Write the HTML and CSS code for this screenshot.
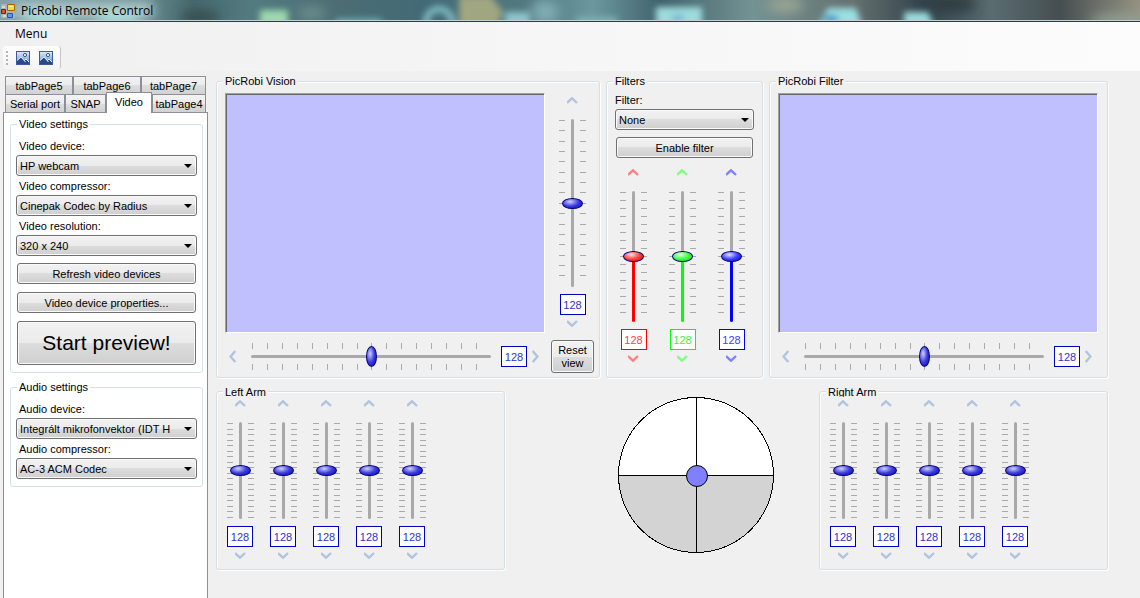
FILE: index.html
```html
<!DOCTYPE html>
<html lang="en">
<head>
<meta charset="utf-8">
<title>PicRobi Remote Control</title>
<link rel="stylesheet" href="styles.css">
</head>
<body>
<svg class="defs" aria-hidden="true">
  <defs>
    <symbol id="up" viewBox="0 0 12 7"><path d="M0 6 5 1.300 10 6" fill="none" stroke="currentColor" stroke-width="2.400"/></symbol>
    <symbol id="down" viewBox="0 0 12 7"><path d="M0 1 5 5.700 10 1" fill="none" stroke="currentColor" stroke-width="2.400"/></symbol>
    <symbol id="left" viewBox="0 0 7 13"><path d="M6.300 1 1.500 6.500 6.300 12" fill="none" stroke="currentColor" stroke-width="2.400"/></symbol>
    <symbol id="right" viewBox="0 0 7 13"><path d="M.7 1 5.500 6.500 .7 12" fill="none" stroke="currentColor" stroke-width="2.400"/></symbol>
    <symbol id="ticks-view" viewBox="0 0 27 168"><path shape-rendering="crispEdges" stroke="#a9a9a9" d="M0 1.500h6m15 0h6M0 11.500h6m15 0h6M0 22.500h6m15 0h6M0 32.500h6m15 0h6M0 42.500h6m15 0h6M0 53.500h6m15 0h6M0 63.500h6m15 0h6M0 73.500h6m15 0h6M0 84.500h6m15 0h6M0 94.500h6m15 0h6M0 105.500h6m15 0h6M0 115.500h6m15 0h6M0 125.500h6m15 0h6M0 136.500h6m15 0h6M0 146.500h6m15 0h6M0 156.500h6m15 0h6"/></symbol>
    <symbol id="ticks-filter" viewBox="0 0 27 131"><path shape-rendering="crispEdges" stroke="#a9a9a9" d="M0 1.500h6m15 0h6M0 9.500h6m15 0h6M0 17.500h6m15 0h6M0 25.500h6m15 0h6M0 33.500h6m15 0h6M0 41.500h6m15 0h6M0 49.500h6m15 0h6M0 57.500h6m15 0h6M0 65.500h6m15 0h6M0 73.500h6m15 0h6M0 81.500h6m15 0h6M0 89.500h6m15 0h6M0 97.500h6m15 0h6M0 105.500h6m15 0h6M0 113.500h6m15 0h6M0 121.500h6m15 0h6"/></symbol>
    <symbol id="ticks-arm" viewBox="0 0 27 97"><path shape-rendering="crispEdges" stroke="#a9a9a9" d="M0 1.500h6m15 0h6M0 7.500h6m15 0h6M0 12.500h6m15 0h6M0 18.500h6m15 0h6M0 23.500h6m15 0h6M0 29.500h6m15 0h6M0 34.500h6m15 0h6M0 40.500h6m15 0h6M0 45.500h6m15 0h6M0 51.500h6m15 0h6M0 56.500h6m15 0h6M0 62.500h6m15 0h6M0 67.500h6m15 0h6M0 73.500h6m15 0h6M0 78.500h6m15 0h6M0 84.500h6m15 0h6M0 89.500h6m15 0h6M0 95.500h6m15 0h6"/></symbol>
    <symbol id="ticks-pan" viewBox="0 0 240 27" preserveAspectRatio="none"><path shape-rendering="crispEdges" stroke="#a9a9a9" d="M1.500 0v6m0 15v6M16.500 0v6m0 15v6M31.500 0v6m0 15v6M46.500 0v6m0 15v6M61.500 0v6m0 15v6M76.500 0v6m0 15v6M91.500 0v6m0 15v6M106.500 0v6m0 15v6M120.500 0v6m0 15v6M135.500 0v6m0 15v6M150.500 0v6m0 15v6M165.500 0v6m0 15v6M180.500 0v6m0 15v6M195.500 0v6m0 15v6M210.500 0v6m0 15v6M225.500 0v6m0 15v6"/></symbol>
    <linearGradient id="sky" x2="0" y2="1"><stop offset="0" stop-color="#dbe8f8"/><stop offset=".5" stop-color="#9dbbe6"/><stop offset="1" stop-color="#4d78bd"/></linearGradient>
    <symbol id="image" viewBox="0 0 14 14">
      <path d="M0 0h14v14H0z" fill="#3a5c9c"/><path d="M1 1h12v12H1z" fill="url(#sky)"/>
      <circle cx="9" cy="4" r="1.600" fill="#f4f8ff" stroke="#33558f"/>
      <path d="M1 13V9.500L5 6l3.500 3.500L10 8l3 3v2z" fill="#264a8c"/><path d="M1 9.500 5 6l4.500 5M8.500 9.500 10 8l3 3" fill="none" stroke="#eef4ff"/>
    </symbol>
  </defs>
</svg>

<header class="titlebar">
  <svg class="backdrop" viewBox="0 0 1140 20" preserveAspectRatio="none" aria-hidden="true">
    <defs>
      <linearGradient id="glass">
        <stop offset="0" stop-color="#7fa2a8"/><stop offset=".12" stop-color="#6d9096"/><stop offset=".17" stop-color="#45686d"/><stop offset=".22" stop-color="#527b80"/>
        <stop offset=".3" stop-color="#4b6d73"/><stop offset=".37" stop-color="#426a76"/><stop offset=".47" stop-color="#547a80"/><stop offset=".52" stop-color="#6b98a0"/><stop offset=".58" stop-color="#41626c"/>
        <stop offset=".66" stop-color="#739393"/><stop offset=".75" stop-color="#64706f"/><stop offset=".81" stop-color="#33444d"/><stop offset=".87" stop-color="#5a6c70"/><stop offset=".93" stop-color="#454e50"/><stop offset="1" stop-color="#949383"/>
      </linearGradient>
      <filter id="soft" filterUnits="userSpaceOnUse" x="0" y="-20" width="1140" height="60"><feGaussianBlur stdDeviation="3"/></filter>
      <filter id="softer" filterUnits="userSpaceOnUse" x="0" y="-20" width="1140" height="60"><feGaussianBlur stdDeviation="6"/></filter>
    </defs>
    <path d="M0 0h1140v20H0z" fill="url(#glass)"/>
    <g filter="url(#softer)">
      <path d="M15 3h138v14H15z" fill="#b4cccd"/><ellipse cx="48" cy="20" rx="24" ry="5" fill="#a4e8e4"/><ellipse cx="118" cy="20" rx="22" ry="5" fill="#a4e8e4"/>
      <ellipse cx="200" cy="17" rx="20" ry="6" fill="#344a48"/><ellipse cx="312" cy="13" rx="14" ry="6" fill="#71908f"/><ellipse cx="785" cy="5" rx="18" ry="8" fill="#9aa494"/>
      <ellipse cx="950" cy="4" rx="26" ry="9" fill="#2d3c43"/><ellipse cx="1120" cy="20" rx="30" ry="6" fill="#93a192"/><ellipse cx="545" cy="12" rx="14" ry="12" fill="#80acb4"/>
    </g>
    <g filter="url(#soft)">
      <path d="M260 10h28v16h-28z" fill="#9cd8ae"/><path d="M336 19h46v6h-46z" fill="#74b6bd"/>
      <circle cx="439" cy="22" r="13" fill="none" stroke="#82bec4" stroke-width="6"/>
      <path d="M459-4h32l12 16-6 14h-38z" fill="#a0a680"/><path d="M505 12h25v14h-25z" fill="#8cc4cb"/>
      <path d="M577 17h40v8h-40z" fill="#80b0b0"/><path d="M656 7h46v20h-46z" fill="#9ddcdc"/><path d="M672 14h12v10h-12z" fill="#7cc0d0"/>
      <path d="M828 8h28l6 18h-44z" fill="#9ae0e2"/><ellipse cx="831" cy="19" rx="8" ry="4" fill="#3c92c4"/><path d="M904 12h24l6 14h-30z" fill="#9adcdc"/>
    </g>
  </svg>
  <div class="caption">
    <svg width="14" height="14" viewBox="0 0 14 14" aria-hidden="true">
      <path d="M0 0h14v14H0z" fill="#aab4b6"/>
      <path d="M6.500.5h7v6h-7z" fill="#ffd24d" stroke="#a06800"/><path d="M8 2h4v1H8z" fill="#fff0b0"/>
      <path d="M.5 5.500h4v4h-4z" fill="#e34a2c" stroke="#8c1c10"/><path d="M6.500 9.500h5v4h-5z" fill="#5f95ee" stroke="#2356a6"/>
      <path d="M2 11h3v2H2zM1 2h3v2H1z" fill="#d4dadb"/>
    </svg>
    <h1>PicRobi Remote Control</h1>
  </div>
</header>

<nav class="menubar"><button type="button">Menu</button></nav>
<div class="toolstrip">
  <div class="toolbar" role="toolbar" aria-label="Tools">
    <span class="grip"></span>
    <button type="button" aria-label="Picture one"><svg width="14" height="14"><use href="#image"/></svg></button>
    <button type="button" aria-label="Picture two"><svg width="14" height="14"><use href="#image"/></svg></button>
  </div>
</div>

<main>
  <aside>
    <div class="tabs" role="tablist">
      <div class="tab-row back"><button type="button" role="tab">tabPage5</button><button type="button" role="tab">tabPage6</button><button type="button" role="tab">tabPage7</button></div>
      <div class="tab-row front"><button type="button" role="tab">Serial port</button><button type="button" role="tab">SNAP</button><button type="button" role="tab" class="active" aria-selected="true">Video</button><button type="button" role="tab">tabPage4</button></div>
    </div>
    <div class="page" role="tabpanel">
      <fieldset class="settings">
        <legend>Video settings</legend>
        <div class="field"><label for="vdev">Video device:</label><select id="vdev"><option>HP webcam</option></select></div>
        <div class="field"><label for="vcomp">Video compressor:</label><select id="vcomp"><option>Cinepak Codec by Radius</option></select></div>
        <div class="field"><label for="vres">Video resolution:</label><select id="vres"><option>320 x 240</option></select></div>
        <div class="actions">
          <button type="button" class="btn">Refresh video devices</button>
          <button type="button" class="btn">Video device properties...</button>
          <button type="button" class="btn large">Start preview!</button>
        </div>
      </fieldset>
      <fieldset class="settings">
        <legend>Audio settings</legend>
        <div class="field"><label for="adev">Audio device:</label><select id="adev"><option>Integrált mikrofonvektor (IDT H</option></select></div>
        <div class="field"><label for="acomp">Audio compressor:</label><select id="acomp"><option>AC-3 ACM Codec</option></select></div>
      </fieldset>
    </div>
  </aside>

  <div class="workspace">
    <div class="views">
      <fieldset class="view with-tilt">
        <legend>PicRobi Vision</legend>
        <div class="screen-column">
          <div class="screen"></div>
          <div class="pan">
            <button type="button" class="step" aria-label="Pan left"><svg width="7" height="13"><use href="#left"/></svg></button>
            <div class="scale"><svg><use href="#ticks-pan"/></svg><input type="range" min="0" max="256" value="128" aria-label="Pan"></div>
            <input type="text" class="value" value="128" aria-label="Pan value">
            <button type="button" class="step" aria-label="Pan right"><svg width="7" height="13"><use href="#right"/></svg></button>
          </div>
        </div>
        <div class="tilt-column">
          <div class="channel tall">
            <button type="button" class="step" aria-label="Tilt up"><svg width="12" height="7"><use href="#up"/></svg></button>
            <div class="scale"><svg><use href="#ticks-view"/></svg><input type="range" min="0" max="256" value="128" aria-label="Tilt"></div>
            <input type="text" class="value" value="128" aria-label="Tilt value">
            <button type="button" class="step" aria-label="Tilt down"><svg width="12" height="7"><use href="#down"/></svg></button>
          </div>
          <button type="button" class="btn reset">Reset view</button>
        </div>
      </fieldset>

      <fieldset class="filters">
        <legend>Filters</legend>
        <div class="field"><label for="filter">Filter:</label><select id="filter"><option>None</option></select></div>
        <button type="button" class="btn">Enable filter</button>
        <div class="channels rgb">
          <div class="channel red">
            <button type="button" class="step" aria-label="Red up"><svg width="12" height="7"><use href="#up"/></svg></button>
            <div class="scale"><svg><use href="#ticks-filter"/></svg><input type="range" min="0" max="256" value="128" aria-label="Red"></div>
            <input type="text" class="value" value="128" aria-label="Red value">
            <button type="button" class="step" aria-label="Red down"><svg width="12" height="7"><use href="#down"/></svg></button>
          </div>
          <div class="channel green">
            <button type="button" class="step" aria-label="Green up"><svg width="12" height="7"><use href="#up"/></svg></button>
            <div class="scale"><svg><use href="#ticks-filter"/></svg><input type="range" min="0" max="256" value="128" aria-label="Green"></div>
            <input type="text" class="value" value="128" aria-label="Green value">
            <button type="button" class="step" aria-label="Green down"><svg width="12" height="7"><use href="#down"/></svg></button>
          </div>
          <div class="channel blue">
            <button type="button" class="step" aria-label="Blue up"><svg width="12" height="7"><use href="#up"/></svg></button>
            <div class="scale"><svg><use href="#ticks-filter"/></svg><input type="range" min="0" max="256" value="128" aria-label="Blue"></div>
            <input type="text" class="value" value="128" aria-label="Blue value">
            <button type="button" class="step" aria-label="Blue down"><svg width="12" height="7"><use href="#down"/></svg></button>
          </div>
        </div>
      </fieldset>

      <fieldset class="view">
        <legend>PicRobi Filter</legend>
        <div class="screen-column">
          <div class="screen"></div>
          <div class="pan">
            <button type="button" class="step" aria-label="Filter left"><svg width="7" height="13"><use href="#left"/></svg></button>
            <div class="scale"><svg><use href="#ticks-pan"/></svg><input type="range" min="0" max="256" value="128" aria-label="Filter amount"></div>
            <input type="text" class="value" value="128" aria-label="Filter amount value">
            <button type="button" class="step" aria-label="Filter right"><svg width="7" height="13"><use href="#right"/></svg></button>
          </div>
        </div>
      </fieldset>
    </div>

    <div class="drive">
      <fieldset class="arm">
        <legend>Left Arm</legend>
        <div class="channels">
          <div class="channel"><button type="button" class="step" aria-label="Left 1 up"><svg width="12" height="7"><use href="#up"/></svg></button><div class="scale"><svg><use href="#ticks-arm"/></svg><input type="range" min="0" max="256" value="128" aria-label="Left 1"></div><input type="text" class="value" value="128" aria-label="Left 1 value"><button type="button" class="step" aria-label="Left 1 down"><svg width="12" height="7"><use href="#down"/></svg></button></div>
          <div class="channel"><button type="button" class="step" aria-label="Left 2 up"><svg width="12" height="7"><use href="#up"/></svg></button><div class="scale"><svg><use href="#ticks-arm"/></svg><input type="range" min="0" max="256" value="128" aria-label="Left 2"></div><input type="text" class="value" value="128" aria-label="Left 2 value"><button type="button" class="step" aria-label="Left 2 down"><svg width="12" height="7"><use href="#down"/></svg></button></div>
          <div class="channel"><button type="button" class="step" aria-label="Left 3 up"><svg width="12" height="7"><use href="#up"/></svg></button><div class="scale"><svg><use href="#ticks-arm"/></svg><input type="range" min="0" max="256" value="128" aria-label="Left 3"></div><input type="text" class="value" value="128" aria-label="Left 3 value"><button type="button" class="step" aria-label="Left 3 down"><svg width="12" height="7"><use href="#down"/></svg></button></div>
          <div class="channel"><button type="button" class="step" aria-label="Left 4 up"><svg width="12" height="7"><use href="#up"/></svg></button><div class="scale"><svg><use href="#ticks-arm"/></svg><input type="range" min="0" max="256" value="128" aria-label="Left 4"></div><input type="text" class="value" value="128" aria-label="Left 4 value"><button type="button" class="step" aria-label="Left 4 down"><svg width="12" height="7"><use href="#down"/></svg></button></div>
          <div class="channel"><button type="button" class="step" aria-label="Left 5 up"><svg width="12" height="7"><use href="#up"/></svg></button><div class="scale"><svg><use href="#ticks-arm"/></svg><input type="range" min="0" max="256" value="128" aria-label="Left 5"></div><input type="text" class="value" value="128" aria-label="Left 5 value"><button type="button" class="step" aria-label="Left 5 down"><svg width="12" height="7"><use href="#down"/></svg></button></div>
        </div>
      </fieldset>

      <svg class="joystick" width="157" height="157" viewBox="0 0 157 157" role="img" aria-label="Drive joystick">
        <circle cx="78" cy="78" r="77.500" fill="#fff"/>
        <path d="M.5 78a77.500 77.500 0 0 0 155 0z" fill="#d3d3d3"/>
        <circle cx="78" cy="78" r="77.500" fill="none" stroke="#000" shape-rendering="crispEdges"/>
        <path d="M78.500 1v155M1 78.500h155" stroke="#000" shape-rendering="crispEdges"/>
        <circle cx="79" cy="79" r="10.500" fill="#8080ff" stroke="#000"/>
      </svg>

      <fieldset class="arm">
        <legend>Right Arm</legend>
        <div class="channels">
          <div class="channel"><button type="button" class="step" aria-label="Right 1 up"><svg width="12" height="7"><use href="#up"/></svg></button><div class="scale"><svg><use href="#ticks-arm"/></svg><input type="range" min="0" max="256" value="128" aria-label="Right 1"></div><input type="text" class="value" value="128" aria-label="Right 1 value"><button type="button" class="step" aria-label="Right 1 down"><svg width="12" height="7"><use href="#down"/></svg></button></div>
          <div class="channel"><button type="button" class="step" aria-label="Right 2 up"><svg width="12" height="7"><use href="#up"/></svg></button><div class="scale"><svg><use href="#ticks-arm"/></svg><input type="range" min="0" max="256" value="128" aria-label="Right 2"></div><input type="text" class="value" value="128" aria-label="Right 2 value"><button type="button" class="step" aria-label="Right 2 down"><svg width="12" height="7"><use href="#down"/></svg></button></div>
          <div class="channel"><button type="button" class="step" aria-label="Right 3 up"><svg width="12" height="7"><use href="#up"/></svg></button><div class="scale"><svg><use href="#ticks-arm"/></svg><input type="range" min="0" max="256" value="128" aria-label="Right 3"></div><input type="text" class="value" value="128" aria-label="Right 3 value"><button type="button" class="step" aria-label="Right 3 down"><svg width="12" height="7"><use href="#down"/></svg></button></div>
          <div class="channel"><button type="button" class="step" aria-label="Right 4 up"><svg width="12" height="7"><use href="#up"/></svg></button><div class="scale"><svg><use href="#ticks-arm"/></svg><input type="range" min="0" max="256" value="128" aria-label="Right 4"></div><input type="text" class="value" value="128" aria-label="Right 4 value"><button type="button" class="step" aria-label="Right 4 down"><svg width="12" height="7"><use href="#down"/></svg></button></div>
          <div class="channel"><button type="button" class="step" aria-label="Right 5 up"><svg width="12" height="7"><use href="#up"/></svg></button><div class="scale"><svg><use href="#ticks-arm"/></svg><input type="range" min="0" max="256" value="128" aria-label="Right 5"></div><input type="text" class="value" value="128" aria-label="Right 5 value"><button type="button" class="step" aria-label="Right 5 down"><svg width="12" height="7"><use href="#down"/></svg></button></div>
        </div>
      </fieldset>
    </div>
  </div>
</main>
</body>
</html>
```
FILE: styles.css
```css
* { box-sizing: border-box; }

html { height: 100%; }

body {
  margin: 0;
  min-height: 100%;
  display: flex;
  flex-direction: column;
  background: #f0f0f0;
  color: #000;
  font: 11px/12px "Liberation Sans", Arial, sans-serif;
}

button, input, select { font: inherit; color: inherit; margin: 0; }

svg { display: block; }

.defs { position: absolute; width: 0; height: 0; }

/* Window chrome */
.titlebar {
  display: grid;
  height: 22px;
  border-bottom: 1px solid #2f3a40;
  overflow: hidden;
}
.titlebar > * { grid-area: 1 / 1; }
.backdrop { width: 100%; height: 21px; border-bottom: 1px solid #c4d2d4; }
.caption { display: flex; align-items: center; gap: 6px; padding-left: 1px; }
.caption h1 { margin: 0; font: 12px/16px "Open Sans", "Noto Sans", sans-serif; }

.menubar {
  display: flex;
  padding: 3px 9px 0;
  height: 24px;
  background: linear-gradient(90deg, #f0f0f0, #fcfcfc);
}
.menubar button {
  height: 18px;
  border: 0;
  padding: 0 6px;
  background: none;
  font: 12px/16px "Open Sans", "Noto Sans", sans-serif;
}

.toolstrip { padding: 0 3px; height: 25px; background: linear-gradient(90deg, #f0f0f0, #fcfcfc); }
.toolbar {
  display: flex;
  align-items: center;
  gap: 9px;
  width: 58px;
  height: 23px;
  padding-left: 3px;
  border-right: 1px solid #c4c4c4;
  border-radius: 3px;
  background: linear-gradient(#fdfdfd, #f4f4f4);
}
.toolbar button { border: 0; padding: 0; background: none; }
.grip {
  width: 2px;
  height: 14px;
  margin-right: -1px;
  background: repeating-linear-gradient(#b4b4b4 0 2px, transparent 2px 4px);
}

main { flex: 1; display: flex; padding: 4px 32px 0 3px; }

/* Tabs */
aside { flex: none; width: 205px; margin-right: 8px; display: flex; flex-direction: column; }
.tabs { padding: 1px 2px 0; }
.tab-row button {
  height: 18px;
  padding: 0;
  border: 1px solid #8c8e98;
  border-bottom: 0;
  background: linear-gradient(#f3f3f3, #ebebeb 50%, #dddddd 50%, #d2d2d2);
  white-space: nowrap;
}
.tab-row.back { display: grid; grid-template-columns: 68fr 68fr 65fr; }
.tab-row.front { display: grid; grid-template-columns: 60fr 41fr 46fr 54fr; }
.tab-row.front .active {
  height: 21px;
  margin: -2px 0 -1px;
  padding-bottom: 2px;
  background: #fff;
  z-index: 1;
}
.page {
  flex: 1;
  display: flex;
  flex-direction: column;
  gap: 8px;
  padding: 5px 4px 8px 6px;
  border: 1px solid #8c8e98;
  border-bottom: 0;
  background: #fff;
}

/* Group boxes */
fieldset {
  min-width: 0;
  margin: 0;
  padding: 0 8px;
  border: 1px solid #d5dfe5;
  border-radius: 3px;
}
.workspace fieldset { box-shadow: 1px 1px 0 #fff, inset 1px 1px 0 #fff; }
legend { padding: 0 2px; margin-left: -2px; height: 12px; background: #f0f0f0; }

.settings { padding: 10px 5px 7px; }
.settings legend { margin-left: 1px; background: #fff; }
.field { display: flex; flex-direction: column; gap: 3px; }
.field + .field { margin-top: 4px; }
.settings label { padding-left: 3px; }

select {
  appearance: none;
  width: 100%;
  height: 21px;
  padding: 0 20px 0 3px;
  border: 1px solid #707070;
  border-radius: 3px;
  box-shadow: inset 0 0 0 1px #fafafa;
  background:
    url("data:image/svg+xml,%3Csvg xmlns='http://www.w3.org/2000/svg' width='8' height='4'%3E%3Cpath d='M0 0h8L4 4z'/%3E%3C/svg%3E") right 4px center no-repeat,
    linear-gradient(#f2f2f2, #ebebeb 50%, #dddddd 50%, #cfcfcf);
}

.btn {
  height: 21px;
  padding: 0 4px;
  border: 1px solid #707070;
  border-radius: 3px;
  box-shadow: inset 0 0 0 1px #fafafa;
  background: linear-gradient(#f2f2f2, #ebebeb 50%, #dddddd 50%, #cfcfcf);
}
.actions { display: flex; flex-direction: column; gap: 8px; padding: 7px 1px 0; }
.btn.large { height: 44px; font-size: 21px; line-height: 24px; }

/* Workspace */
.workspace { flex: 1; min-width: 0; display: flex; flex-direction: column; gap: 8px; }
.views { display: grid; grid-template-columns: 384fr 157px 339fr; gap: 6px; }

.view { padding: 6px 9px 4px 8px; }
.view.with-tilt { display: grid; grid-template-columns: 1fr 54px; padding-right: 0; }
.screen {
  height: 240px;
  border: 1px solid;
  border-color: #a0a0a0 #fff #fff #a0a0a0;
  box-shadow: inset 1px 1px 0 #696969;
  background: #c0c0ff;
}
.tilt-column { display: flex; flex-direction: column; align-items: center; gap: 13px; padding: 4px 0 0 1px; }
.reset { width: 43px; height: 33px; line-height: 13px; }

.filters { display: flex; flex-direction: column; padding: 7px 8px 0; }
.filters .btn { margin: 7px 1px 11px; width: calc(100% - 2px); }

/* Sliders */
.step { display: block; border: 0; padding: 0; background: none; color: #b0c4de; }
.step svg { overflow: visible; }
.step use { overflow: visible; }
.value {
  width: 26px;
  height: 21px;
  padding: 0;
  border: 1px solid #0000c0;
  background: #fff;
  color: #3232c8;
  text-align: center;
}
.scale { display: grid; justify-items: center; align-items: center; }
.scale > * { grid-area: 1 / 1; }
.scale svg { width: 100%; height: 100%; }
.scale input { appearance: none; width: 100%; height: 100%; background: none; }

.pan { display: flex; align-items: center; padding: 10px 6px 0 4px; }
.pan .scale { flex: 1; height: 27px; margin: 0 10px 0 15px; }
.pan .value { margin-right: 5px; }
.pan input::-webkit-slider-runnable-track { height: 3px; border-radius: 2px; background: #a9a9a9; }
.pan input::-webkit-slider-thumb {
  appearance: none;
  width: 11px;
  height: 21px;
  margin-top: -9px;
  border: 1px solid #00007c;
  border-radius: 50%;
  background: radial-gradient(ellipse at 35% 35%, #d0d0ff, #3c3cdc 50%, #0000c8);
}

.channel { display: flex; flex-direction: column; align-items: center; width: 27px; --track: #a9a9a9; --glow: #d0d0ff; --mid: #3c3cdc; --deep: #0000c8; }
.channel .scale { width: 27px; height: 97px; margin: 15px 0 7px; }
.channel .value { margin-bottom: 5px; }
.channel.tall .scale { height: 168px; }
.rgb .channel .scale { height: 131px; }
.channel input[type="range"] { writing-mode: vertical-lr; direction: rtl; }
.channel input::-webkit-slider-runnable-track {
  width: 3px;
  border-radius: 2px;
  background: linear-gradient(#a9a9a9 50%, var(--track) 50%);
}
.channel input::-webkit-slider-thumb {
  appearance: none;
  width: 21px;
  height: 11px;
  margin-left: -9px;
  border: 1px solid #00007c;
  border-radius: 50%;
  background: radial-gradient(ellipse at 38% 30%, var(--glow), var(--mid) 50%, var(--deep));
}
.channel.red { --track: #f00; --glow: #ffe0e0; --mid: #ff4040; --deep: #e00000; }
.channel.green { --track: #0f0; --glow: #e0ffe0; --mid: #40ff40; --deep: #00e000; }
.channel.blue { --track: #00f; --glow: #e0e0ff; --mid: #4040ff; --deep: #0000e0; }
.red .step { color: #ff8080; }
.green .step { color: #80ff80; }
.blue .step { color: #8080ff; }
.red .value { border-color: #f00; color: #ff4040; }
.green .value { border-color: #0f0; color: #40f040; }
.blue .value { border-color: #00f; color: #4040ff; }

.channels { display: flex; gap: 16px; }
.rgb { gap: 22px; padding-left: 5px; }

/* Lower row */
.drive { display: grid; grid-template-columns: 289px 1fr 289px; align-items: start; }
.arm { padding: 3px 10px 10px; }
.arm legend { height: 11px; margin-left: -4px; overflow: hidden; }
.arm .value { align-self: flex-start; }
.joystick { justify-self: end; margin: 11px 44px 0 0; }
```
